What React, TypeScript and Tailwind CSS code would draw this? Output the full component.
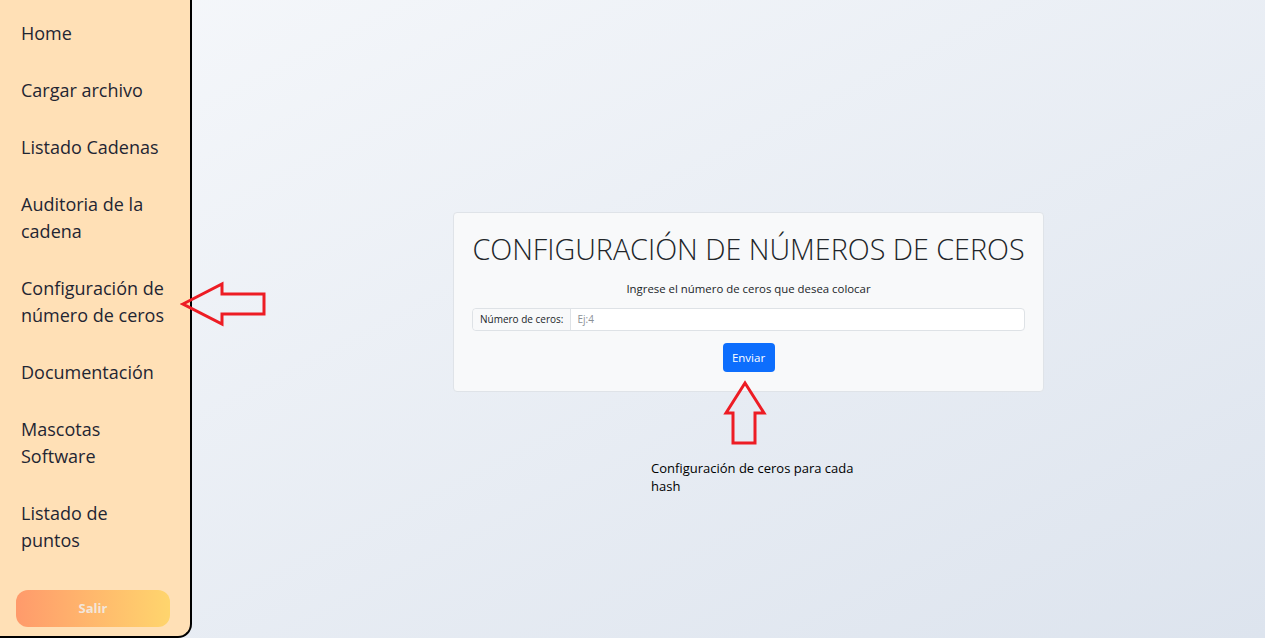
const menu = [
  'Home',
  'Cargar archivo',
  'Listado Cadenas',
  'Auditoria de la cadena',
  'Configuración de número de ceros',
  'Documentación',
  'Mascotas Software',
  'Listado de puntos',
]

function Sidebar() {
  return (
    <aside className="w-[192px] h-[638px] shrink-0 bg-[#ffe0b6] border-r-2 border-b-2 border-black rounded-br-[14px] flex flex-col justify-between">
      <ul className="pt-[20px] pl-[21px]">
        {menu.map((item) => (
          <li key={item} className="w-[146px] text-[18px] leading-[27px] text-[#1f2633] pb-[30px]">
            {item}
          </li>
        ))}
      </ul>
      <div className="pl-[16px] pb-[9px]">
        <button className="w-[154px] h-[37px] rounded-[12px] bg-gradient-to-r from-[#ff9a6b] to-[#ffd56d] text-[13px] font-bold text-[#f3e6da]">
          Salir
        </button>
      </div>
    </aside>
  )
}

export default function App() {
  return (
    <div className="relative flex w-[1265px] h-[638px] overflow-hidden bg-gradient-to-br from-[#f6f8fb] to-[#dde4ee] font-['Open_Sans',sans-serif]">
      <Sidebar />

      {/* main content */}
      <main className="flex-1 flex justify-center items-start pl-[40px] pt-[212px]">
        <div className="w-[591px] h-[180px] bg-[#f8f9fa] border border-[#dfe3e8] rounded-[4px] px-[18px] pt-[18px] flex flex-col items-center">
          <h1 className="text-[28.7px] font-light text-[#212529] leading-[36px] whitespace-nowrap">
            CONFIGURACIÓN DE NÚMEROS DE CEROS
          </h1>
          <p className="mt-[14px] text-[11.4px] text-[#212529] leading-[16px]">
            Ingrese el número de ceros que desea colocar
          </p>
          <div className="mt-[11px] w-full flex h-[23px] border border-[#dee2e6] rounded-[4px] bg-white text-[10px]">
            <span className="px-[7px] flex items-center bg-[#f8f9fa] border-r border-[#dee2e6] rounded-l-[4px] text-[#212529]">
              Número de ceros:
            </span>
            <span className="px-[6px] flex items-center text-[#8a9096]">Ej:4</span>
          </div>
          <button className="mt-[12px] w-[52px] h-[29px] rounded-[4px] bg-[#0d6efd] text-white text-[11.5px]">
            Enviar
          </button>
        </div>
      </main>

      {/* annotations */}
      <svg className="absolute left-[180px] top-[280px]" width="90" height="50" viewBox="0 0 90 50">
        <path
          d="M3 24 L42 4 L42 14 L84 14 L84 34 L42 34 L42 44 Z"
          fill="none"
          stroke="#ed1c24"
          strokeWidth="3"
          strokeLinejoin="miter"
        />
      </svg>
      <svg className="absolute left-[720px] top-[378px]" width="50" height="70" viewBox="0 0 50 70">
        <path
          d="M25 5 L44 35 L35 35 L35 65 L13 65 L13 35 L6 35 Z"
          fill="none"
          stroke="#ed1c24"
          strokeWidth="3"
          strokeLinejoin="miter"
        />
      </svg>
      <p className="absolute left-[651px] top-[459px] w-[215px] text-[13px] leading-[18px] text-black">
        Configuración de ceros para cada hash
      </p>
    </div>
  )
}
